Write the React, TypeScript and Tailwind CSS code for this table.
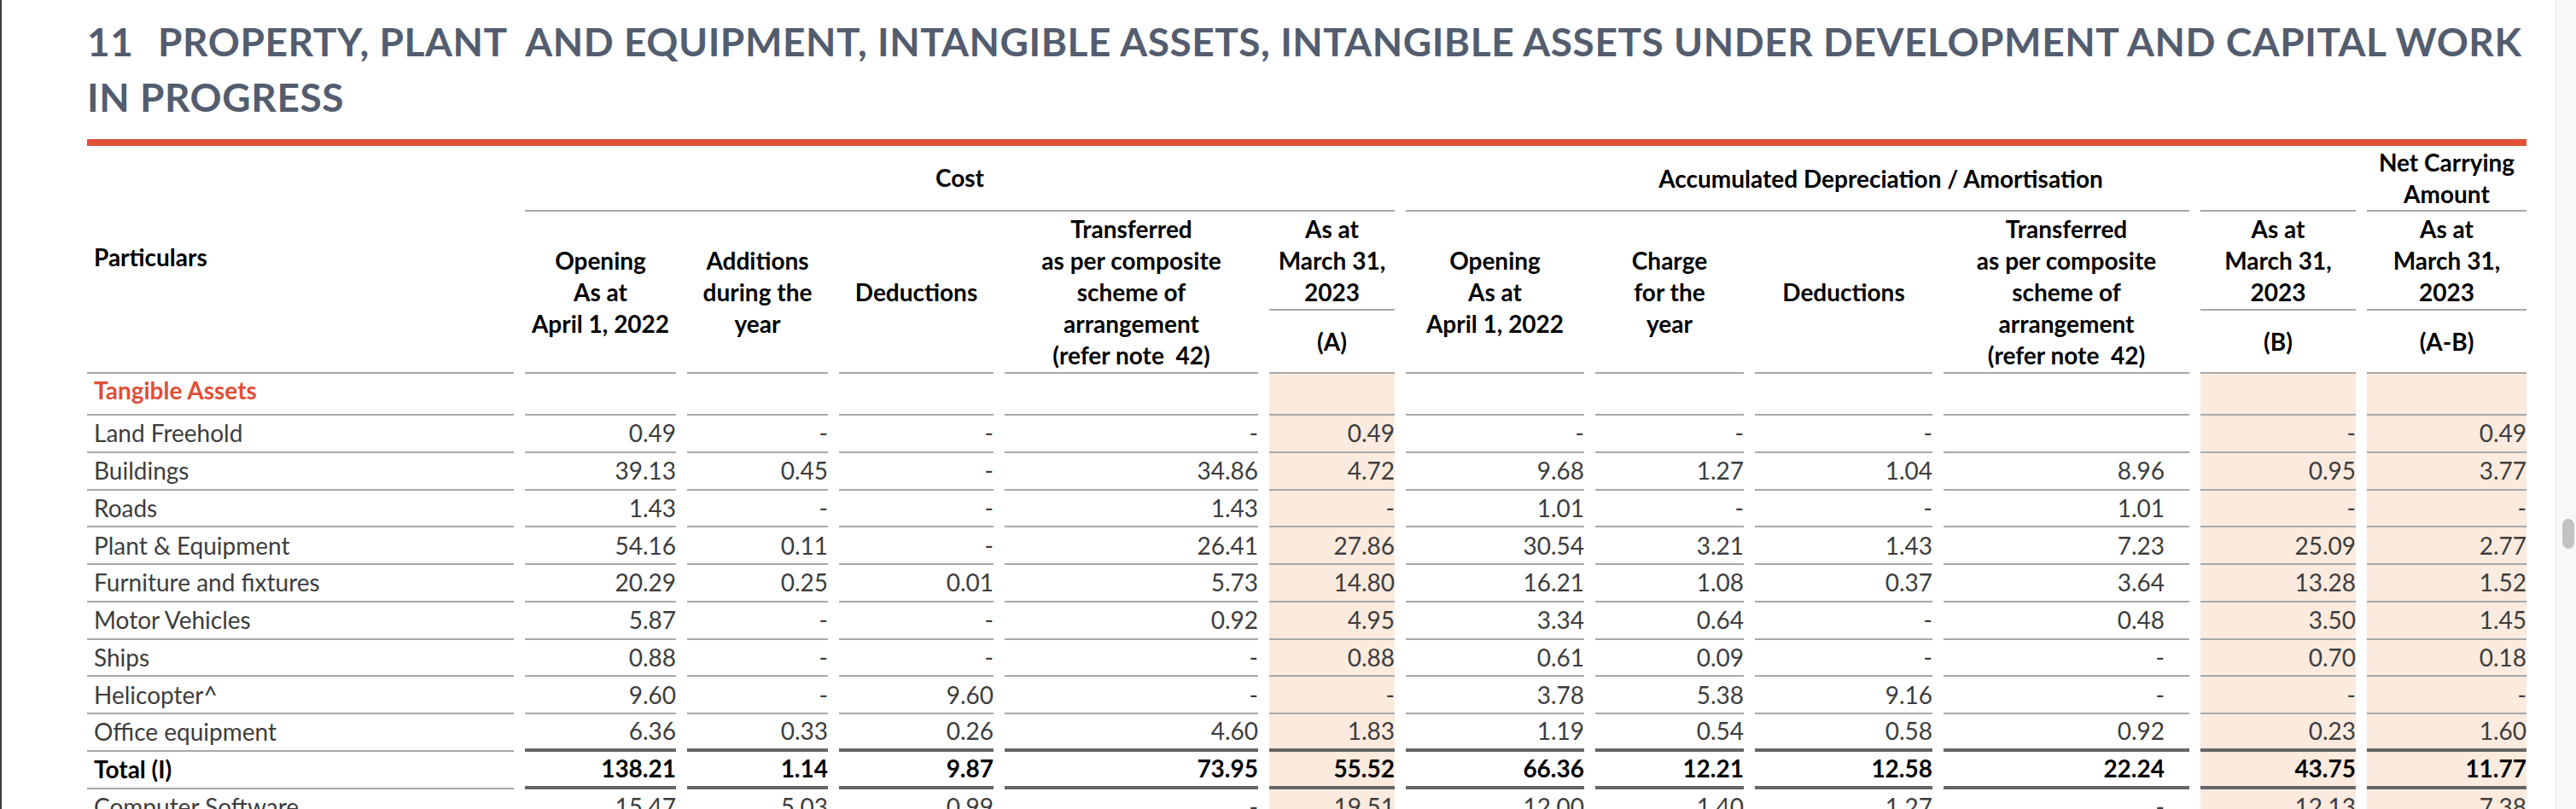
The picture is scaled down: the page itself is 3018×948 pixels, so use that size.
const COLS =
  "grid grid-cols-[500px_177px_165px_181px_297px_147px_209px_174px_208px_288px_182px_187px] gap-x-[13px]";

type Row = { label: string; values: string[] };

const rows: Row[] = [
  { label: "Land Freehold", values: ["0.49", "-", "-", "-", "0.49", "-", "-", "-", "", "-", "0.49"] },
  { label: "Buildings", values: ["39.13", "0.45", "-", "34.86", "4.72", "9.68", "1.27", "1.04", "8.96", "0.95", "3.77"] },
  { label: "Roads", values: ["1.43", "-", "-", "1.43", "-", "1.01", "-", "-", "1.01", "-", "-"] },
  { label: "Plant & Equipment", values: ["54.16", "0.11", "-", "26.41", "27.86", "30.54", "3.21", "1.43", "7.23", "25.09", "2.77"] },
  { label: "Furniture and fixtures", values: ["20.29", "0.25", "0.01", "5.73", "14.80", "16.21", "1.08", "0.37", "3.64", "13.28", "1.52"] },
  { label: "Motor Vehicles", values: ["5.87", "-", "-", "0.92", "4.95", "3.34", "0.64", "-", "0.48", "3.50", "1.45"] },
  { label: "Ships", values: ["0.88", "-", "-", "-", "0.88", "0.61", "0.09", "-", "-", "0.70", "0.18"] },
  { label: "Helicopter^", values: ["9.60", "-", "9.60", "-", "-", "3.78", "5.38", "9.16", "-", "-", "-"] },
  { label: "Office equipment", values: ["6.36", "0.33", "0.26", "4.60", "1.83", "1.19", "0.54", "0.58", "0.92", "0.23", "1.60"] },
];

const total: Row = {
  label: "Total (I)",
  values: ["138.21", "1.14", "9.87", "73.95", "55.52", "66.36", "12.21", "12.58", "22.24", "43.75", "11.77"],
};

const software: Row = {
  label: "Computer Software",
  values: ["15.47", "5.03", "0.99", "-", "19.51", "12.00", "1.40", "1.27", "-", "12.13", "7.38"],
};

// value columns with the peach fill: (A), (B), (A-B)
const shaded = [4, 9, 10];

function DataRow({ row, bold, thick }: { row: Row; bold?: boolean; thick?: boolean }) {
  const line = thick ? "border-b-4 border-[#666666]" : "border-b-2 border-[#a8a8a8]";
  return (
    <div className={`${COLS} h-[43.75px] ${bold ? "font-bold text-black" : "text-[#3d3d3d]"}`}>
      <div className="flex items-center border-b-2 border-[#a8a8a8] pl-2">{row.label}</div>
      {row.values.map((v, i) => (
        <div
          key={i}
          className={`flex items-center justify-end ${line} ${shaded.includes(i) ? "bg-[#fbeade]" : ""} ${
            i === 8 ? "pr-[29px]" : ""
          }`}
        >
          {v}
        </div>
      ))}
    </div>
  );
}

const App = () => {
  return (
    <div className="flex h-[948px] w-[3018px] overflow-hidden bg-white font-[Lato,sans-serif]">
      <div className="w-[2994px] shrink-0 border-l-2 border-[#3c3c3c] pl-[100px]">
        <div className="w-[2858px]">
          <h1 className="pt-[16px] text-[46px] leading-[65px] font-bold tracking-[0.55px] text-[#535d6f]">
            <div className="whitespace-pre">
              <span className="inline-block w-[83px]">11</span>
              {"PROPERTY, PLANT  AND EQUIPMENT, INTANGIBLE ASSETS, INTANGIBLE ASSETS UNDER DEVELOPMENT AND CAPITAL WORK"}
            </div>
            <div className="whitespace-pre">IN PROGRESS</div>
          </h1>
          <div className="mt-[17px] h-[8px] bg-[#e05138]" />

          <div className="text-[28px] leading-[37px]">
            {/* header */}
            <div className={`${COLS} grid-rows-[77px_116px_74px] font-bold text-black`}>
              <div className="col-start-1 row-span-3 row-start-1 flex items-center border-b-2 border-[#a8a8a8] pb-1 pl-2">
                Particulars
              </div>

              <div className="col-span-5 col-start-2 row-start-1 flex items-center justify-center border-b-2 border-[#a8a8a8]">
                Cost
              </div>
              <div className="col-span-4 col-start-7 row-start-1 border-b-2 border-[#a8a8a8]" />
              <div className="col-start-11 row-start-1 border-b-2 border-[#a8a8a8]" />
              <div className="col-span-5 col-start-7 row-start-1 flex items-center justify-center">
                Accumulated Depreciation / Amortisation
              </div>
              <div className="col-start-12 row-start-1 flex items-center justify-center border-b-2 border-[#a8a8a8] text-center">
                Net Carrying
                <br />
                Amount
              </div>

              <div className="col-start-2 row-span-2 row-start-2 flex items-center justify-center border-b-2 border-[#a8a8a8] text-center">
                Opening
                <br />
                As at
                <br />
                April 1, 2022
              </div>
              <div className="col-start-3 row-span-2 row-start-2 flex items-center justify-center border-b-2 border-[#a8a8a8] text-center">
                Additions
                <br />
                during the
                <br />
                year
              </div>
              <div className="col-start-4 row-span-2 row-start-2 flex items-center justify-center border-b-2 border-[#a8a8a8]">
                Deductions
              </div>
              <div className="col-start-5 row-span-2 row-start-2 flex items-center justify-center border-b-2 border-[#a8a8a8] text-center whitespace-pre">
                {"Transferred\nas per composite\nscheme of\narrangement\n(refer note  42)"}
              </div>
              <div className="col-start-6 row-start-2 flex items-center justify-center border-b-2 border-[#a8a8a8] text-center">
                As at
                <br />
                March 31,
                <br />
                2023
              </div>
              <div className="col-start-6 row-start-3 flex items-center justify-center border-b-2 border-[#a8a8a8]">(A)</div>

              <div className="col-start-7 row-span-2 row-start-2 flex items-center justify-center border-b-2 border-[#a8a8a8] text-center">
                Opening
                <br />
                As at
                <br />
                April 1, 2022
              </div>
              <div className="col-start-8 row-span-2 row-start-2 flex items-center justify-center border-b-2 border-[#a8a8a8] text-center">
                Charge
                <br />
                for the
                <br />
                year
              </div>
              <div className="col-start-9 row-span-2 row-start-2 flex items-center justify-center border-b-2 border-[#a8a8a8]">
                Deductions
              </div>
              <div className="col-start-10 row-span-2 row-start-2 flex items-center justify-center border-b-2 border-[#a8a8a8] text-center whitespace-pre">
                {"Transferred\nas per composite\nscheme of\narrangement\n(refer note  42)"}
              </div>
              <div className="col-start-11 row-start-2 flex items-center justify-center border-b-2 border-[#a8a8a8] text-center">
                As at
                <br />
                March 31,
                <br />
                2023
              </div>
              <div className="col-start-11 row-start-3 flex items-center justify-center border-b-2 border-[#a8a8a8]">(B)</div>
              <div className="col-start-12 row-start-2 flex items-center justify-center border-b-2 border-[#a8a8a8] text-center">
                As at
                <br />
                March 31,
                <br />
                2023
              </div>
              <div className="col-start-12 row-start-3 flex items-center justify-center border-b-2 border-[#a8a8a8]">(A-B)</div>
            </div>

            {/* section title */}
            <div className={`${COLS} h-[49px]`}>
              <div className="border-b-2 border-[#a8a8a8] pt-px pl-2 font-bold text-[#e04e36]">Tangible Assets</div>
              {Array.from({ length: 11 }).map((_, i) => (
                <div
                  key={i}
                  className={`border-b-2 border-[#a8a8a8] ${shaded.includes(i) ? "bg-[#fbeade]" : ""}`}
                />
              ))}
            </div>

            {rows.map((r, i) => (
              <DataRow key={r.label} row={r} thick={i === rows.length - 1} />
            ))}
            <DataRow row={total} bold thick />
            <DataRow row={software} />
          </div>
        </div>
      </div>

      <div className="w-[24px] shrink-0 border-l border-[#e6e6e6] bg-[#f8f8f8] pt-[608px] pl-[7px]">
        <div className="h-[35px] w-[14px] rounded-[7px] bg-[#c2c2c2]" />
      </div>
    </div>
  );
};

export default App;
